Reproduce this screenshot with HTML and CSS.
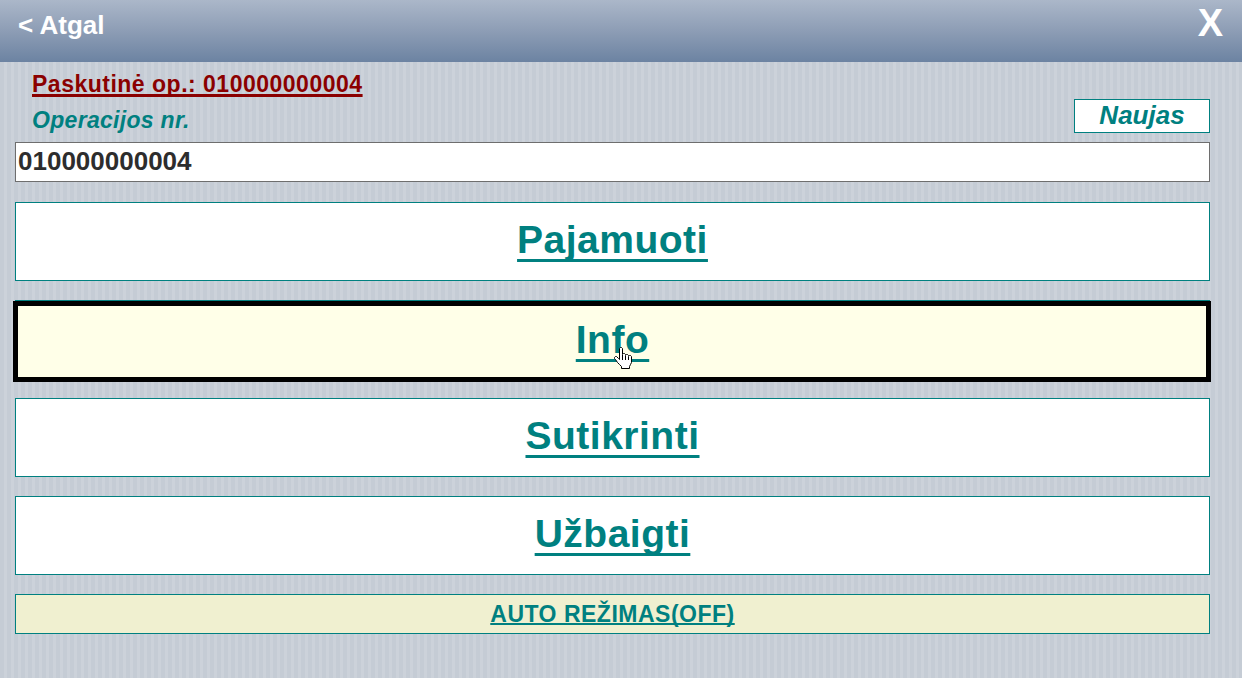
FILE: index.html
```html
<!DOCTYPE html>
<html lang="lt">
  <head>
    <meta charset="UTF-8" />
    <meta name="viewport" content="width=device-width, initial-scale=1.0" />
    <title>Operacija</title>
    <link rel="stylesheet" href="styles.css">
  </head>
  <body>
    <div class="header">
      <a href="javascript:;" class="back">&lt; Atgal</a>
      <a href="javascript:;" class="close">X</a>
    </div>
    <div class="main">
      <a href="javascript:;" class="last">Paskutinė op.: 010000000004</a>
      <div class="oprow">
        <span class="label">Operacijos nr.</span>
        <a href="javascript:;" class="new">Naujas</a>
      </div>
      <div class="input">010000000004</div>
      <div class="buttons">
        <div class="btn"><a href="javascript:;">Pajamuoti</a></div>
        <div class="btn sel">
          <a href="javascript:;">Info</a>
          <!-- pelės žymeklis -->
          <svg class="cursor" width="19" height="23" viewBox="0 0 19 23">
            <path d="M5.5 1.5 L6.5 0.5 L7.5 0.5 L8.5 1.5 L8.5 7.5 L9.5 6.5 L10.5 6.5 L11.5 7.5 L11.5 8.5 L12.5 7.5 L13.5 7.5 L14.5 8.5 L14.5 9.5 L15.5 8.5 L16.5 8.5 L17.5 9.5 L17.5 15.5 L16.5 17.5 L15.5 19.5 L15.5 21.5 L7.5 21.5 L7.5 19.5 L5.5 17.5 L3.5 15.5 L1.5 12.5 L0.5 11.5 L0.5 10.5 L1.5 9.5 L2.5 9.5 L4.5 11.5 L5.5 12.5 Z" fill="#fff" stroke="#000" stroke-width="1" />
            <path d="M8.5 8 L8.5 13 M11.5 9 L11.5 13 M14.5 10 L14.5 13" stroke="#000" stroke-width="1" fill="none" />
          </svg>
        </div>
        <div class="btn"><a href="javascript:;">Sutikrinti</a></div>
        <div class="btn"><a href="javascript:;">Užbaigti</a></div>
        <div class="auto"><a href="javascript:;">AUTO REŽIMAS(OFF)</a></div>
      </div>
    </div>
  </body>
</html>
```

FILE: styles.css
```css
* {
  margin: 0;
  padding: 0;
  box-sizing: border-box;
}
body {
  width: 1242px;
  height: 678px;
  overflow: hidden;
  font-family: "Liberation Sans", Arial, sans-serif;
  font-weight: bold;
  background: repeating-linear-gradient(90deg, #c5ccd5 0, #c5ccd5 4px, #ccd2da 4px, #ccd2da 7px);
}
a {
  color: #008080;
  text-decoration-skip-ink: none;
}
.header {
  height: 62px;
  display: flex;
  justify-content: space-between;
  align-items: flex-start;
  padding: 10px 19px 0 18px;
  background: linear-gradient(#abb7c9, #8d9db5 50%, #6c83a2);
}
.header a {
  color: #fff;
  text-decoration: none;
}
.back {
  font-size: 26px;
  line-height: 30px;
}
.close {
  font-size: 38px;
  line-height: 40px;
  margin-top: -7px;
}
.main {
  padding: 9px 32px 0 15px;
  display: flex;
  flex-direction: column;
  align-items: flex-start;
}
.last {
  margin-left: 17px;
  font-size: 23px;
  line-height: 26px;
  letter-spacing: 0.5px;
  color: #8b0000;
  text-decoration-thickness: 3px;
}
.oprow {
  width: 100%;
  margin-top: 2px;
  display: flex;
  justify-content: space-between;
  align-items: flex-end;
}
.label {
  margin-left: 17px;
  font-size: 23px;
  line-height: 26px;
  letter-spacing: 0.3px;
  font-style: italic;
  color: #008080;
}
.new {
  width: 136px;
  height: 34px;
  border: 1px solid #008080;
  background: #fff;
  font-size: 26px;
  line-height: 31px;
  font-style: italic;
  text-align: center;
  text-decoration: none;
}
.input {
  width: 100%;
  height: 40px;
  margin-top: 9px;
  padding-left: 2px;
  border: 1px solid #6e6e6e;
  background: #fff;
  color: #2d2d2d;
  font-size: 26px;
  line-height: 37px;
}
.buttons {
  width: 100%;
  margin-top: 20px;
  display: flex;
  flex-direction: column;
  gap: 19px;
}
.btn {
  position: relative;
  height: 79px;
  padding-bottom: 4px;
  border: 1px solid #008080;
  background: #fff;
  text-align: center;
  font-size: 39px;
  line-height: 73px;
  letter-spacing: 0.5px;
}
.btn a {
  text-decoration-thickness: 3px;
  text-underline-offset: 6px;
}
/* pasirinktas mygtukas */
.btn.sel {
  height: 81px;
  padding-top: 2px;
  margin-bottom: -2px;
  background: #ffffe8;
}
.btn.sel::after {
  content: "";
  position: absolute;
  top: 0;
  left: -3px;
  right: -2px;
  bottom: -2px;
  border: 5px solid #000;
}
.cursor {
  position: absolute;
  left: calc(50% + 1px);
  top: 46px;
}
.auto {
  height: 40px;
  border: 1px solid #008080;
  background: #f0f0d0;
  text-align: center;
  font-size: 23px;
  line-height: 38px;
  letter-spacing: 0.5px;
}
.auto a {
  text-decoration-thickness: 2px;
}
```
